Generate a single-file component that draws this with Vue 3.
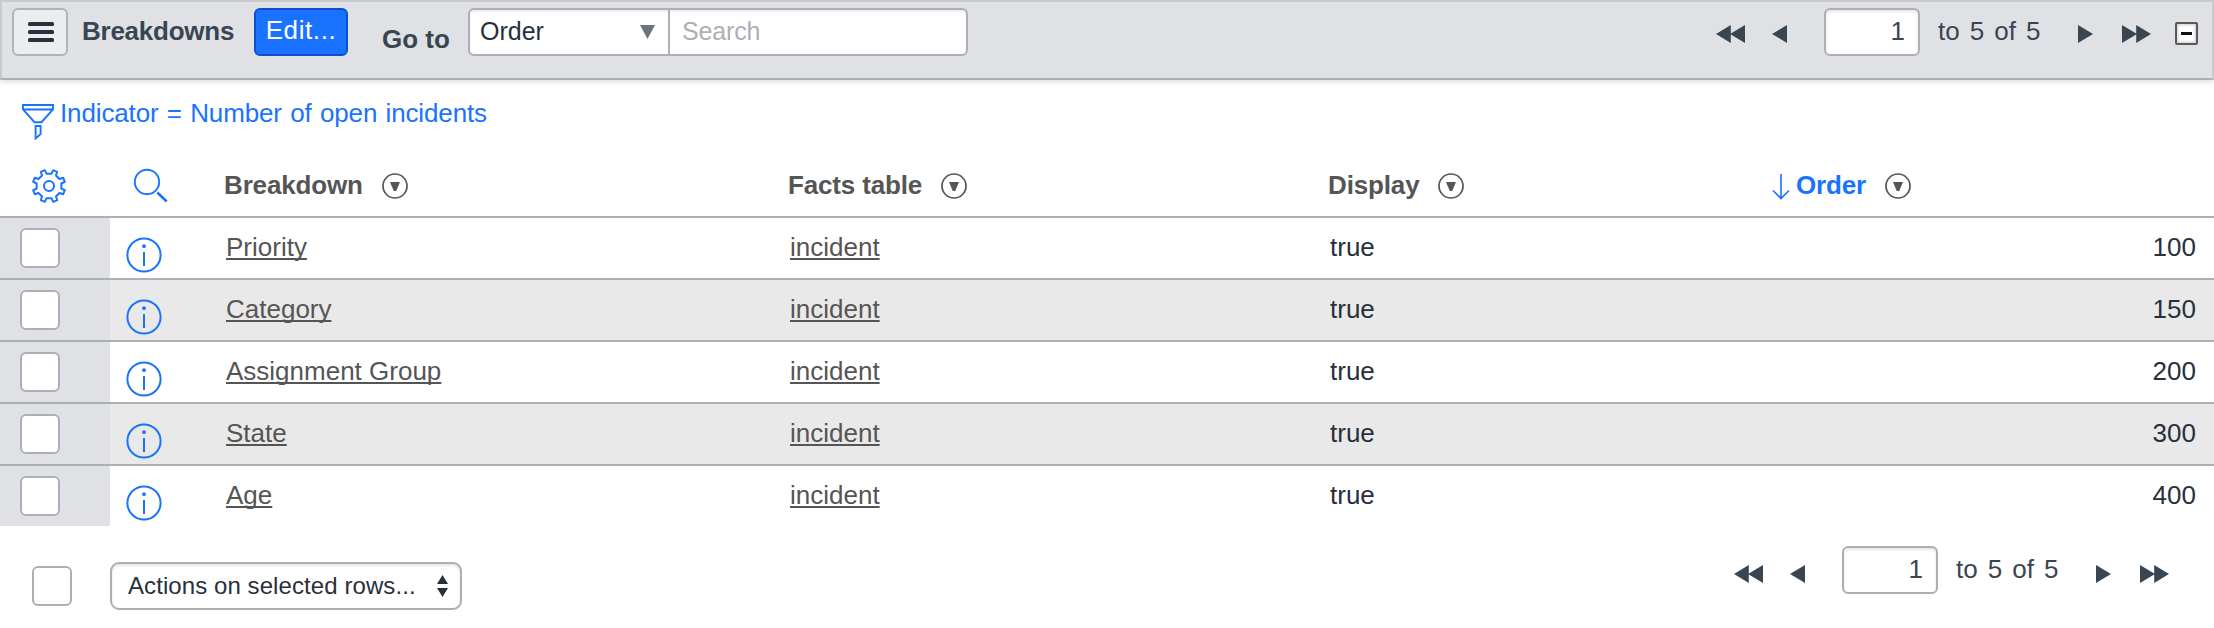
<script setup>
import { ref } from 'vue'

const rows = ref([
  { name: 'Priority', table: 'incident', display: 'true', order: 100 },
  { name: 'Category', table: 'incident', display: 'true', order: 150 },
  { name: 'Assignment Group', table: 'incident', display: 'true', order: 200 },
  { name: 'State', table: 'incident', display: 'true', order: 300 },
  { name: 'Age', table: 'incident', display: 'true', order: 400 }
])

const columns = [
  { label: 'Breakdown', key: 'breakdown' },
  { label: 'Facts table', key: 'facts' },
  { label: 'Display', key: 'display' },
  { label: 'Order', key: 'order', sorted: true }
]

// Eight-toothed gear outline centred on 18,18
const point = (deg, r) => {
  const a = (deg * Math.PI) / 180
  return `${(18 + r * Math.sin(a)).toFixed(2)} ${(18 - r * Math.cos(a)).toFixed(2)}`
}
const gear =
  'M' +
  Array.from({ length: 8 }, (_, i) => {
    const c = 22.5 + i * 45
    return [point(c - 11, 12.6), point(c - 7.5, 16.4), point(c + 7.5, 16.4), point(c + 11, 12.6)].join('L')
  }).join('L') +
  'Z'
</script>

<template>
  <div class="page">
    <header class="bar">
      <button class="menu"><i></i><i></i><i></i></button>
      <h1 class="title">Breakdowns</h1>
      <button class="edit">Edit...</button>
      <label class="goto">Go to</label>
      <div class="finder">
        <div class="field">
          <span>Order</span>
          <svg width="15" height="14" viewBox="0 0 15 14"><path d="M0 0H15L7.5 14Z" fill="#6b757e" /></svg>
        </div>
        <div class="search">Search</div>
      </div>
      <nav class="pager">
        <svg class="arrows" width="29" height="18" viewBox="0 0 29 18"><path d="M0 9L14.8 0V18ZM14 9L29 0V18Z" /></svg>
        <svg class="prev" width="15" height="18" viewBox="0 0 15 18"><path d="M0 9L15 0V18Z" /></svg>
        <div class="pageno">1</div>
        <span class="range">to 5 of 5</span>
        <svg class="next" width="15" height="18" viewBox="0 0 15 18"><path d="M15 9L0 0V18Z" /></svg>
        <svg class="arrows" width="29" height="18" viewBox="0 0 29 18"><path d="M29 9L14.2 0V18ZM15 9L0 0V18Z" /></svg>
      </nav>
      <button class="collapse"><i></i></button>
    </header>

    <div class="filter">
      <svg width="34" height="38" viewBox="0 0 34 38" fill="none" stroke="#1a73ff" stroke-width="1.9">
        <path d="M2 2H32V6.5L20.5 19.2H13.5L2 6.5ZM2 6.5H32" />
        <path d="M14.6 23H19.6V31L14.6 35.4Z" />
      </svg>
      <a>Indicator = Number of open incidents</a>
    </div>

    <div class="grid head">
      <div class="cell tool-gear">
        <svg width="36" height="36" viewBox="0 0 36 36" fill="none" stroke="#1a73ff" stroke-width="2" stroke-linejoin="round">
          <path :d="gear" />
          <circle cx="18" cy="18" r="5" />
        </svg>
      </div>
      <div class="cell tool-search">
        <svg width="36" height="36" viewBox="0 0 36 36" fill="none" stroke="#1a73ff">
          <circle cx="14" cy="14" r="12.2" stroke-width="1.9" />
          <path d="M24.3 24.5L33.7 33.5" stroke-width="2.6" />
        </svg>
      </div>
      <div v-for="c in columns" :key="c.key" class="cell heading" :class="[c.key, { sorted: c.sorted }]">
        <svg v-if="c.sorted" class="down" width="18" height="27" viewBox="0 0 18 27" fill="none" stroke="#1a73ff" stroke-width="1.6">
          <path d="M9 1V25.5M1 17.5L9 25.5L17 17.5" />
        </svg>
        <span>{{ c.label }}</span>
        <svg width="26" height="26" viewBox="0 0 26 26">
          <circle cx="13" cy="13" r="12" fill="none" stroke="#555" stroke-width="1.7" />
          <path d="M8 9H18L14.2 18H11.8Z" fill="#555" />
        </svg>
      </div>
    </div>

    <div v-for="r in rows" :key="r.name" class="grid row">
      <div class="cell select"><span class="check"></span></div>
      <div class="cell info">
        <svg width="36" height="36" viewBox="0 0 36 36">
          <circle cx="18" cy="18" r="16.6" fill="none" stroke="#1a73ff" stroke-width="2" />
          <circle cx="18" cy="9.2" r="1.9" fill="#1a73ff" />
          <path d="M18 15V29" stroke="#1a73ff" stroke-width="2" />
        </svg>
      </div>
      <div class="cell"><a class="link">{{ r.name }}</a></div>
      <div class="cell shifted"><a class="link">{{ r.table }}</a></div>
      <div class="cell shifted">{{ r.display }}</div>
      <div class="cell number">{{ r.order }}</div>
    </div>

    <footer class="foot">
      <span class="check"></span>
      <div class="actions">
        <span>Actions on selected rows...</span>
        <svg width="11" height="22" viewBox="0 0 11 22"><path d="M5.5 0L11 9H0ZM5.5 22L0 13H11Z" fill="#28303b" /></svg>
      </div>
      <nav class="pager">
        <svg class="arrows" width="29" height="18" viewBox="0 0 29 18"><path d="M0 9L14.8 0V18ZM14 9L29 0V18Z" /></svg>
        <svg class="prev" width="15" height="18" viewBox="0 0 15 18"><path d="M0 9L15 0V18Z" /></svg>
        <div class="pageno">1</div>
        <span class="range">to 5 of 5</span>
        <svg class="next" width="15" height="18" viewBox="0 0 15 18"><path d="M15 9L0 0V18Z" /></svg>
        <svg class="arrows" width="29" height="18" viewBox="0 0 29 18"><path d="M29 9L14.2 0V18ZM15 9L0 0V18Z" /></svg>
      </nav>
    </footer>
  </div>
</template>

<style>
body {
  margin: 0;
  background: #fff;
}
</style>

<style scoped>
.page {
  width: 2214px;
  height: 628px;
  overflow: hidden;
  background: #fff;
  color: #28303b;
  font: 26px/30px "Liberation Sans", Arial, sans-serif;
}
.page * {
  box-sizing: border-box;
}
svg {
  display: block;
  flex: none;
}
button {
  padding: 0;
  font: inherit;
}
.bar {
  display: flex;
  align-items: flex-start;
  height: 80px;
  padding: 6px 14px 0 10px;
  background: #e0e1e5;
  border: 2px solid #c8cace;
  border-bottom-color: #acafb6;
  box-shadow: 0 2px 6px rgba(0, 0, 0, 0.14);
}
.menu {
  display: flex;
  flex-direction: column;
  align-items: center;
  gap: 4px;
  width: 56px;
  height: 48px;
  padding: 12px 0 0 2px;
  background: #ecedef;
  border: 2px solid #b0b3ba;
  border-radius: 6px;
}
.menu i {
  width: 26px;
  height: 4px;
  border-radius: 1.5px;
  background: #28303b;
}
.title {
  width: 171px;
  margin: 8px 0 0 14px;
  color: #3a4552;
  font-size: 26px;
  line-height: 30px;
  letter-spacing: -0.25px;
}
.edit {
  width: 94px;
  height: 48px;
  margin-left: 1px;
  padding: 0 0 4px;
  color: #fff;
  background: #1a73ff;
  border: 2px solid #0a50d0;
  border-radius: 6px;
  letter-spacing: 0.6px;
}
.goto {
  width: 85px;
  margin: 16px 0 0 34px;
  color: #3a4552;
  font-weight: bold;
}
.finder {
  display: flex;
  width: 500px;
  height: 48px;
  margin-left: 1px;
  background: #fff;
  border: 2px solid #acafb6;
  border-radius: 6px;
  box-shadow: inset 0 2px 2px rgba(0, 0, 0, 0.07);
}
.field {
  display: flex;
  justify-content: space-between;
  width: 200px;
  padding: 6px 13px 0 10px;
  border-right: 2px solid #acafb6;
}
.field span {
  font-size: 25px;
}
.field svg {
  margin-top: 9px;
}
.search {
  padding: 6px 12px;
  color: #acafb6;
  font-size: 25px;
  letter-spacing: -0.15px;
}
.pager {
  display: flex;
  margin-left: auto;
  color: #3a4552;
  fill: #3a4552;
}
.pager svg {
  margin-top: 17px;
}
.pager .prev {
  margin-left: 27px;
}
.pageno {
  width: 96px;
  height: 48px;
  margin-left: 37px;
  padding: 6px 13px 0 0;
  text-align: right;
  background: #fff;
  border: 2px solid #acafb6;
  border-radius: 6px;
  box-shadow: inset 0 2px 3px rgba(0, 0, 0, 0.1);
}
.range {
  width: 122px;
  margin: 8px 0 0 18px;
  word-spacing: 2.8px;
  white-space: nowrap;
}
.pager .next {
  margin-left: 18px;
  margin-right: 29px;
}
.collapse {
  display: flex;
  align-items: center;
  justify-content: center;
  width: 23px;
  height: 23px;
  margin: 14px 0 0 24px;
  background: #fff;
  border: 2px solid #5a5a5a;
  border-radius: 2px;
  box-shadow: inset 0 0 3px 1px rgba(0, 0, 0, 0.2);
}
.collapse i {
  width: 11px;
  height: 3px;
  background: #111;
}
.filter {
  display: flex;
  gap: 5px;
  height: 75px;
  padding: 23px 0 0 21px;
  color: #1a73ff;
}
.filter a {
  margin-top: -5px;
  letter-spacing: -0.13px;
  word-spacing: 1.2px;
}
.grid {
  display: grid;
  grid-template-columns: 110px 114px 563px 540px 444px 1fr;
}
.head {
  height: 63px;
  border-bottom: 2px solid #acafb6;
}
.head .cell {
  display: flex;
  align-items: flex-start;
}
.tool-gear {
  padding: 13px 0 0 31px;
}
.tool-search {
  padding: 13px 0 0 23px;
}
.heading {
  padding-top: 18px;
  color: #555;
  font-weight: bold;
  letter-spacing: -0.15px;
}
.heading.facts,
.heading.display,
.heading.order {
  padding-left: 1px;
}
.heading span {
  margin: -3px 19px 0 0;
}
.heading.sorted {
  color: #1a73ff;
}
.heading .down {
  margin: 0 6px 0 0;
}
.row {
  height: 62px;
  border-bottom: 2px solid #acafb6;
}
.row:nth-of-type(even) {
  background: #e9e9e9;
}
.row .cell {
  padding: 14px 0 0 2px;
}
.row .shifted {
  padding-left: 3px;
}
.row .select {
  padding: 10px 0 0 20px;
  background: #e0e1e5;
}
.row .info {
  padding: 18.5px 0 0 15.6px;
}
.row .number {
  grid-column: 6;
  padding-right: 18px;
  text-align: right;
}
.row:nth-last-of-type(1) {
  height: 60px;
  border-bottom: 0;
}
.link {
  color: #555;
  text-decoration: underline;
  text-decoration-thickness: 2px;
  text-underline-offset: 2px;
  text-decoration-skip-ink: none;
}
.check {
  display: block;
  width: 40px;
  height: 40px;
  background: #fff;
  border: 2px solid #acafb6;
  border-radius: 6px;
}
.foot {
  display: flex;
  align-items: flex-start;
  padding: 20px 45px 0 32px;
}
.foot > .check {
  margin-top: 20px;
}
.actions {
  display: flex;
  justify-content: space-between;
  width: 352px;
  height: 48px;
  margin: 16px 0 0 38px;
  padding: 7px 12px 0 16px;
  background: #fff;
  border: 2px solid #acafb6;
  border-radius: 9px;
  box-shadow: inset 0 2px 3px rgba(0, 0, 0, 0.1);
  font-size: 24px;
  letter-spacing: 0.08px;
}
.actions svg {
  margin-top: 4px;
}
.foot .pager svg {
  margin-top: 19px;
}
</style>
